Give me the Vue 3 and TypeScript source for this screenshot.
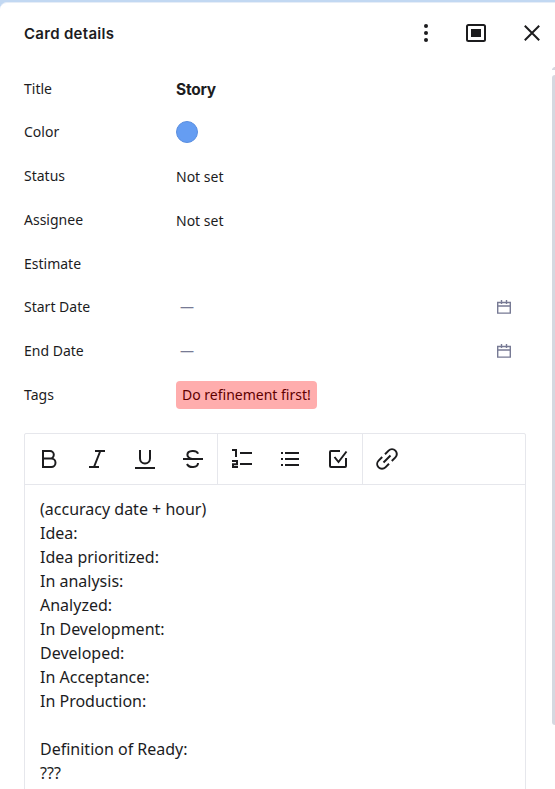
<script setup lang="ts">
interface Field {
  label: string
  kind: 'title' | 'color' | 'text' | 'date' | 'tag'
  value: string
}

const fields: Field[] = [
  { label: 'Title', kind: 'title', value: 'Story' },
  { label: 'Color', kind: 'color', value: '' },
  { label: 'Status', kind: 'text', value: 'Not set' },
  { label: 'Assignee', kind: 'text', value: 'Not set' },
  { label: 'Estimate', kind: 'text', value: '' },
  { label: 'Start Date', kind: 'date', value: '—' },
  { label: 'End Date', kind: 'date', value: '—' },
  { label: 'Tags', kind: 'tag', value: 'Do refinement first!' },
]

interface Tool {
  name: string
  path: string
}

const toolGroups: Tool[][] = [
  [
    { name: 'Bold', path: 'M6 4h7a3.8 3.8 0 0 1 0 7.6H6M13 11.6h1.3a4.2 4.2 0 0 1 0 8.4H6V3' },
    { name: 'Italic', path: 'M10 4h10M4 20h10M15.3 4 9 20' },
    { name: 'Underline', path: 'M7 3v8.5a5 5 0 0 0 10 0V3M2 21h20' },
    { name: 'Strikethrough', path: 'M2 12h20M17 6.7C16 2.8 6.4 2.8 6.4 7.7c0 2.5 2 3.5 4.6 4.3M6 17c1.8 4.2 11 4.2 11-1' },
  ],
  [
    { name: 'Numbered list', path: 'M2 3h4v7M10 6h12M10 17h12M2 14h5v3.2H3V20h5' },
    { name: 'Bulleted list', path: 'M7 6h14M7 12h14M7 18h14M3 6h2M3 12h2M3 18h2' },
    { name: 'Checklist', path: 'M14 4H5a1 1 0 0 0-1 1v14a1 1 0 0 0 1 1h14a1 1 0 0 0 1-1v-8M8.5 10l4 5L20.5 4.5' },
  ],
  [
    { name: 'Link', path: 'M8.5 15.5l7-7M10 7.2l3.6-3.6a4.8 4.8 0 0 1 6.8 6.8L16.8 14M7.2 10l-3.6 3.6a4.8 4.8 0 0 0 6.8 6.8L14 16.8' },
  ],
]

const lines: string[] = [
  '(accuracy date + hour)',
  'Idea:',
  'Idea prioritized:',
  'In analysis:',
  'Analyzed:',
  'In Development:',
  'Developed:',
  'In Acceptance:',
  'In Production:',
  '',
  'Definition of Ready:',
  '???',
]
</script>

<template>
  <div class="board">
    <section class="panel">
      <header class="header">
        <h1>Card details</h1>
        <div class="actions">
          <button aria-label="More">
            <svg viewBox="0 0 24 24" fill="currentColor"><circle cx="12" cy="5" r="2" /><circle cx="12" cy="12" r="2" /><circle cx="12" cy="19" r="2" /></svg>
          </button>
          <button aria-label="Open as modal">
            <svg viewBox="0 0 24 24"><rect x="3" y="4" width="18" height="16" rx="1.5" /><rect x="7" y="8" width="10" height="8" fill="currentColor" stroke="none" /></svg>
          </button>
          <button aria-label="Close">
            <svg viewBox="0 0 24 24"><path d="M4.8 4.8l14.4 14.4M19.2 4.8L4.8 19.2" /></svg>
          </button>
        </div>
      </header>

      <div class="fields">
        <div v-for="field in fields" :key="field.label" class="field" :class="field.kind">
          <span class="label">{{ field.label }}</span>
          <span class="value">
            <span v-if="field.kind === 'color'" class="swatch"></span>
            <template v-else>
              <span class="content">{{ field.value }}</span>
              <svg v-if="field.kind === 'date'" class="calendar" viewBox="0 0 14 14">
                <path d="M.7 2.5h12.6v10.6H.7zM1 6h12M4.5 0v4M9.5 0v4" />
              </svg>
            </template>
          </span>
        </div>
      </div>

      <div class="editor">
        <div class="toolbar">
          <div v-for="(group, i) in toolGroups" :key="i" class="group">
            <button v-for="tool in group" :key="tool.name" :aria-label="tool.name">
              <svg viewBox="0 0 24 24"><path :d="tool.path" /></svg>
            </button>
          </div>
        </div>
        <div class="text">
          <p v-for="(line, i) in lines" :key="i">{{ line }}</p>
        </div>
      </div>

      <div class="scrollbar">
        <svg viewBox="0 0 3 3"><path d="M0 3V2L2 0H3V3z" /></svg>
        <div class="thumb"></div>
      </div>
    </section>
  </div>
</template>

<style>
body {
  overflow: hidden;
}
</style>

<style scoped>
.board {
  box-sizing: border-box;
  height: 789px;
  padding-top: 2px;
  overflow: hidden;
  background: #c2d8f2;
  color: #1c1c1e;
  font-family: 'Noto Sans', sans-serif;
  font-size: 14px;
}

.panel {
  position: relative;
  box-sizing: border-box;
  height: 787px;
  overflow: hidden;
  background: #fff;
  border-top: 1px solid #e6edf7;
  border-top-left-radius: 7px;
}

.header {
  display: flex;
  align-items: center;
  justify-content: space-between;
  height: 60px;
  padding-left: 24px;
}

h1 {
  margin: 0;
  padding-top: 2px;
  font: 600 15px/24px Inter, sans-serif;
  letter-spacing: 0.3px;
}

.actions {
  display: flex;
  gap: 16px;
  padding-right: 3px;
}

button {
  display: flex;
  align-items: center;
  justify-content: center;
  width: 40px;
  height: 40px;
  padding: 0;
  border: 0;
  background: none;
  color: inherit;
}

.actions button:first-child {
  margin-right: -6px;
}

svg {
  display: block;
  fill: none;
  stroke: currentColor;
  stroke-width: 2;
}

.actions svg {
  width: 24px;
  height: 24px;
}

.actions button:first-child svg {
  fill: currentColor;
  stroke: none;
}

.fields {
  display: grid;
  grid-template-rows: 44px 42px 1fr 44px 44px 42px 1fr 44px;
  height: 350px;
  padding: 4px 30px 0 24px;
}

.field {
  display: grid;
  grid-template-columns: 152px 1fr;
  align-items: center;
  line-height: 20px;
}

/* Rows that follow the shorter ones absorb the spare pixel above their content. */
.field:nth-child(3),
.field:nth-child(7) {
  padding-top: 1px;
}

.value {
  display: flex;
  align-items: center;
}

.text .content {
  padding-top: 1px;
}

.title .content {
  padding-top: 2px;
  font: 700 15.5px/20px Inter, sans-serif;
  letter-spacing: -0.25px;
}

.swatch {
  box-sizing: border-box;
  width: 22px;
  height: 22px;
  border: 1px solid #5b8fe0;
  border-radius: 50%;
  background: #659df2;
}

.date .value {
  justify-content: space-between;
  padding: 0 14px 0 4px;
  color: #777a94;
}

.calendar {
  width: 14px;
  height: 14px;
  stroke-width: 1.4;
}

.tag .content {
  padding: 4px 6px;
  border-radius: 4px;
  background: #ffadad;
  color: #600000;
}

.editor {
  width: 500px;
  margin: 16px 0 0 24px;
  border: 1px solid #e6e7ec;
  border-radius: 2px;
}

.toolbar {
  display: flex;
  height: 50px;
  border-bottom: 1px solid #e6e7ec;
}

.group {
  display: flex;
  align-items: center;
}

.group + .group {
  border-left: 1px solid #e6e7ec;
}

.group button {
  width: 48px;
}

.group svg {
  width: 24px;
  height: 24px;
}

.editor .text {
  padding: 12px 15px;
  font-size: 16px;
  line-height: 24px;
}

p {
  min-height: 24px;
  margin: 0;
}

.scrollbar {
  position: absolute;
  top: 64px;
  right: 0;
  width: 3px;
}

.scrollbar svg {
  width: 3px;
  height: 3px;
  fill: #d5d8e0;
  stroke: none;
}

.thumb {
  height: 650px;
  margin-top: 5px;
  border-radius: 3px 0 0 3px;
  background: #d5d8e0;
}
</style>
